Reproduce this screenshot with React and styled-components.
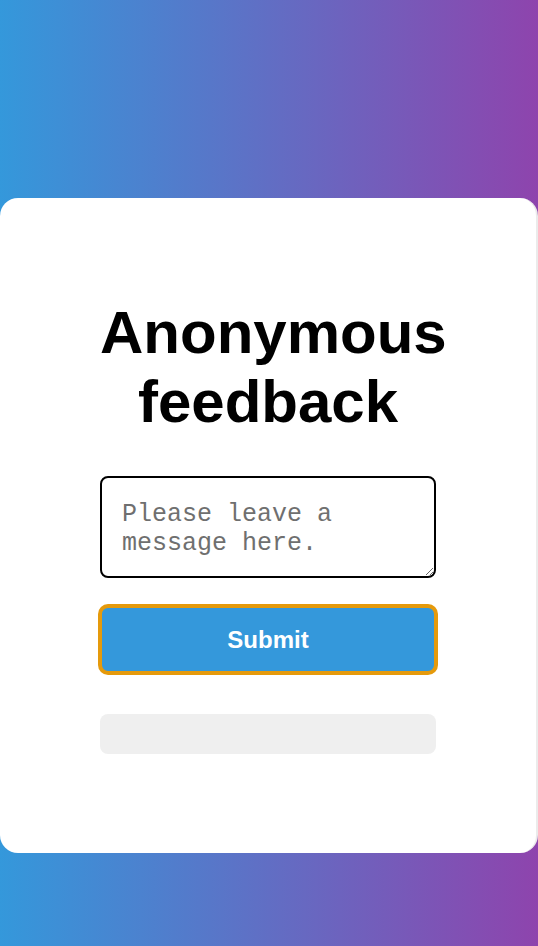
import React from "react";
import styled, { createGlobalStyle } from "styled-components";

const GlobalStyle = createGlobalStyle`
  html, body {
    margin: 0;
    padding: 0;
  }
  body {
    min-height: 946px;
    background: linear-gradient(to right, #3498db, #8e44ad);
    font-family: "Liberation Sans", Arial, sans-serif;
    overflow: hidden;
  }
`;

const Page = styled.div`
  padding-top: 198px;
  min-height: 946px;
  box-sizing: border-box;
`;

const Card = styled.main`
  box-sizing: border-box;
  width: 538px;
  background: #ffffff;
  border-radius: 18px;
  border-right: 2px solid #ebebeb;
  padding: 100px 100px 99px 100px;
  display: flex;
  flex-direction: column;
  align-items: stretch;
`;

const Title = styled.h1`
  margin: 0 0 40px;
  font-family: "Liberation Sans", Arial, sans-serif;
  font-size: 60px;
  font-weight: 700;
  line-height: 69px;
  text-align: center;
  color: #000;
`;

const Form = styled.form`
  display: flex;
  flex-direction: column;
  margin: 0;
`;

const Message = styled.textarea`
  display: block;
  box-sizing: border-box;
  width: 336px;
  height: 102px;
  margin: 0 0 28px;
  padding: 22px 18px 18px 20px;
  border: 2px solid #000;
  border-radius: 8px;
  font-family: "Liberation Mono", "Courier New", monospace;
  font-size: 25px;
  line-height: 29px;
  color: #000;
  background: #fff;
  outline: none;
  &::placeholder {
    color: #6f6f6f;
  }
`;

const SubmitButton = styled.button`
  box-sizing: border-box;
  width: 336px;
  height: 67px;
  margin: 0;
  background: #3498db;
  color: #ffffff;
  border: 2px solid #e59a0c;
  box-shadow: 0 0 0 2px #e59a0c;
  border-radius: 8px;
  font-family: "Liberation Sans", Arial, sans-serif;
  font-size: 24px;
  font-weight: 700;
  cursor: pointer;
`;

const Status = styled.div`
  margin-top: 41px;
  height: 40px;
  background: #efefef;
  border-radius: 8px;
`;

export default function App() {
  return (
    <>
      <GlobalStyle />
      <Page>
        <Card>
          <Title>Anonymous feedback</Title>
          <Form onSubmit={(e) => e.preventDefault()}>
            <Message placeholder="Please leave a message here." />
            <SubmitButton type="submit">Submit</SubmitButton>
          </Form>
          <Status />
        </Card>
      </Page>
    </>
  );
}
